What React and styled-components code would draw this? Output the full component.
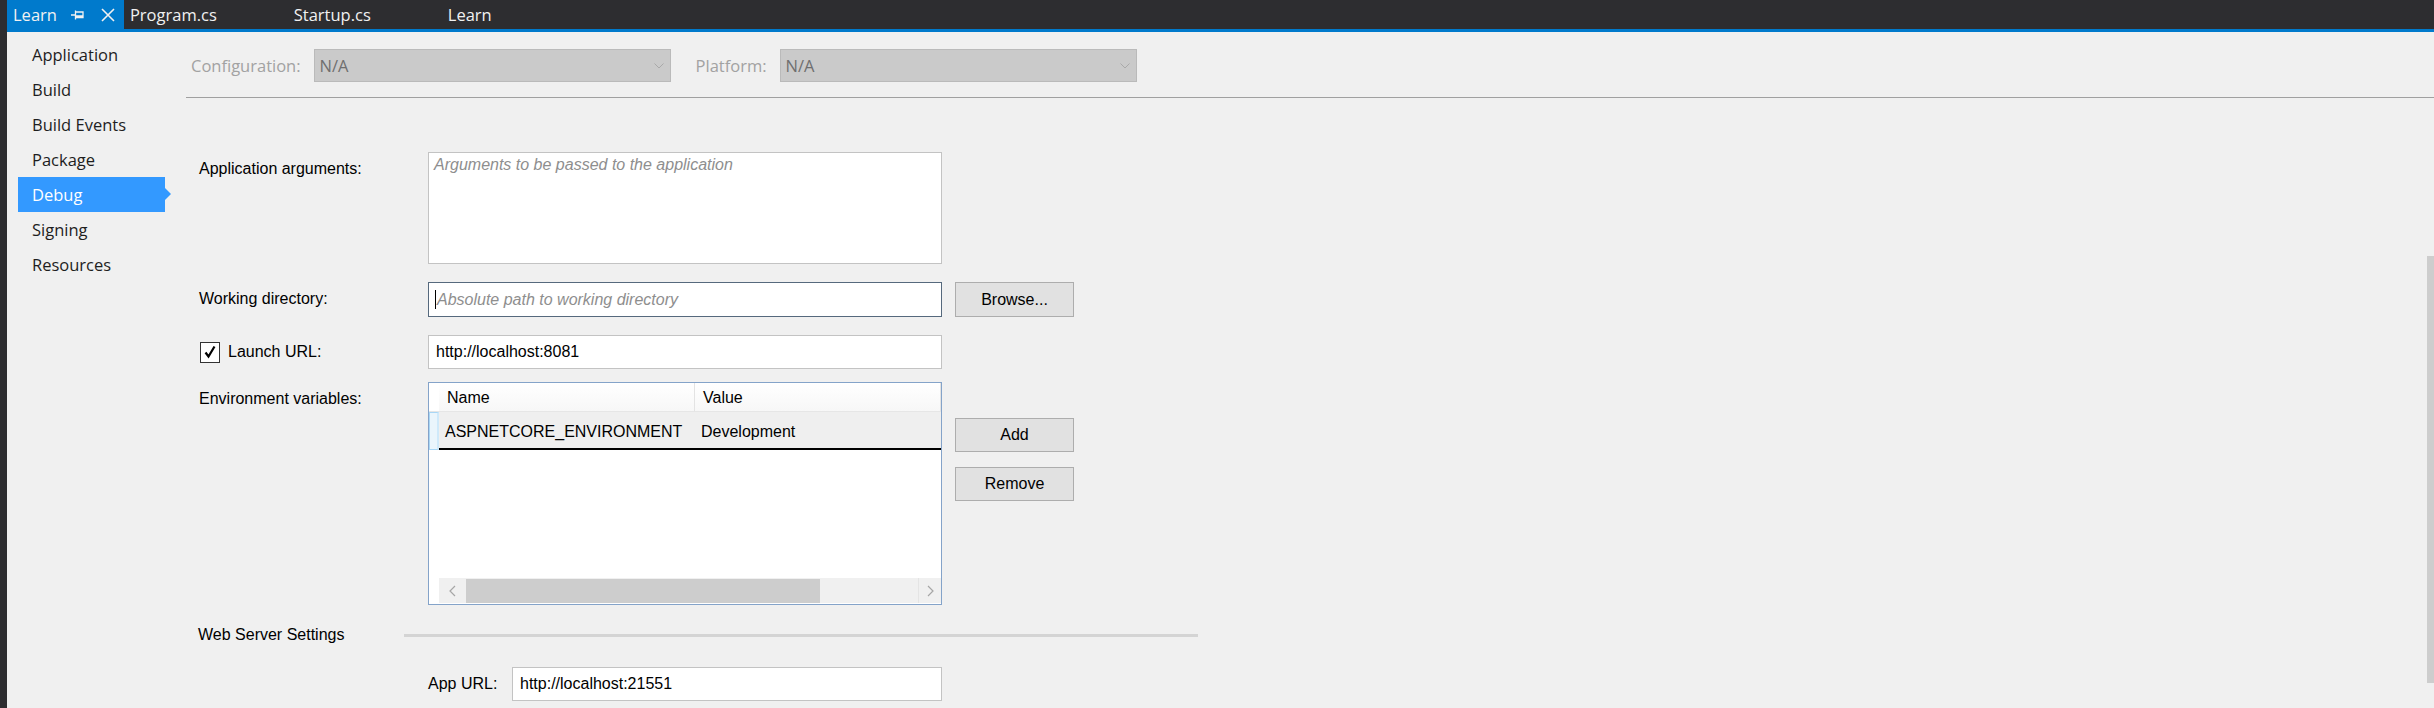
// Visual Studio project properties page, Debug tab

import React from 'react';
import styled, { createGlobalStyle } from 'styled-components';

const GlobalStyle = createGlobalStyle`
  html, body {
    margin: 0;
    padding: 0;
    background: #f0f0f0;
  }
  body {
    width: 2434px;
    height: 708px;
    overflow: hidden;
  }
`;

const Window = styled.div`
  display: flex;
  width: 2434px;
  height: 708px;
  background: #f0f0f0;
`;

const Strip = styled.div`
  width: 7px;
  flex: none;
  background: #2d2d30;
`;

const Main = styled.div`
  flex: 1;
  display: flex;
  flex-direction: column;
  min-width: 0;
`;

const TabBar = styled.div`
  display: flex;
  height: 29px;
  background: #2d2d30;
  border-bottom: 3px solid #007acc;
`;

const Tab = styled.div`
  display: flex;
  align-items: center;
  height: 29px;
  padding: 0 ${props => props.active ? 9 : 13}px 0 6px;
  background: ${props => props.active ? '#007acc' : 'transparent'};
  color: #f1f1f1;
  font-family: 'Segoe UI', 'Open Sans', sans-serif;
  font-size: 16.5px;
  white-space: nowrap;
`;

const TabIcon = styled.svg`
  flex: none;
  margin-left: ${props => props.gap}px;
  visibility: ${props => props.shown ? 'visible' : 'hidden'};
`;

const Body = styled.div`
  flex: 1;
  display: flex;
  min-height: 0;
`;

const Sidebar = styled.nav`
  width: 179px;
  flex: none;
  box-sizing: border-box;
  padding: 5px 0 0 11px;
  display: flex;
  flex-direction: column;
`;

const NavItem = styled.div`
  position: relative;
  width: 147px;
  height: 35px;
  line-height: 36px;
  box-sizing: border-box;
  padding-left: 14px;
  font-family: 'Segoe UI', 'Open Sans', sans-serif;
  font-size: 16.5px;
  color: ${props => props.active ? '#ffffff' : '#1e1e1e'};
  background: ${props => props.active ? '#3399ff' : 'transparent'};

  &::after {
    content: '';
    display: ${props => props.active ? 'block' : 'none'};
    position: absolute;
    left: 100%;
    top: 11px;
    border-left: 6px solid #3399ff;
    border-top: 6px solid transparent;
    border-bottom: 6px solid transparent;
  }
`;

const Content = styled.div`
  flex: 1;
  display: flex;
  flex-direction: column;
  min-width: 0;
`;

const ConfigBar = styled.div`
  display: flex;
  align-items: center;
  height: 33px;
  margin-top: 17px;
  padding-left: 5px;
  font-family: 'Segoe UI', 'Open Sans', sans-serif;
  font-size: 16.5px;
`;

const ConfigLabel = styled.span`
  color: #a2a2a2;
  margin: 0 13px 0 ${props => props.gap || 0}px;
`;

const Dropdown = styled.div`
  display: flex;
  align-items: center;
  justify-content: space-between;
  width: 357px;
  height: 33px;
  box-sizing: border-box;
  padding: 0 6px 0 5px;
  background: #cacaca;
  border: 1px solid #bababa;
  color: #6f6f6f;
`;

const Separator = styled.div`
  margin-top: 15px;
  height: 1px;
  background: #a0a0a0;
`;

const Page = styled.div`
  flex: 1;
  display: flex;
  min-height: 0;
`;

const Form = styled.div`
  flex: 1;
  padding: 54px 0 0 13px;
  font-family: 'Liberation Sans', Arial, sans-serif;
  font-size: 16px;
  color: #000;
`;

const Row = styled.div`
  display: grid;
  grid-template-columns: 216px 514px 119px;
  column-gap: 13px;
  align-items: start;
  margin-top: ${props => props.top || 0}px;
`;

const Label = styled.div`
  display: flex;
  align-items: center;
  gap: 8px;
  height: 34px;
  white-space: nowrap;
`;

const TextBox = styled.div`
  display: flex;
  align-items: ${props => props.multiline ? 'flex-start' : 'center'};
  height: ${props => props.h || 34}px;
  box-sizing: border-box;
  padding: ${props => props.multiline ? '3px 5px' : '0 7px'};
  background: #ffffff;
  border: 1px solid ${props => props.focused ? '#56697d' : '#c3c3c3'};
  white-space: nowrap;
`;

const Placeholder = styled.span`
  font-style: italic;
  color: #8e8e8e;
`;

const Caret = styled.span`
  display: inline-block;
  width: 1px;
  height: 19px;
  background: #000;
  margin: 0 1px 0 -1px;
`;

const Button = styled.div`
  display: flex;
  align-items: center;
  justify-content: center;
  width: 119px;
  height: ${props => props.h || 34}px;
  box-sizing: border-box;
  margin-top: ${props => props.top || 0}px;
  background: #e1e1e1;
  border: 1px solid #adadad;
`;

const ButtonStack = styled.div`
  display: flex;
  flex-direction: column;
`;

const CheckBox = styled.div`
  display: flex;
  align-items: center;
  justify-content: center;
  width: 20px;
  height: 21px;
  box-sizing: border-box;
  margin-left: 1px;
  background: #fff;
  border: 1px solid #333;
`;

const Grid = styled.div`
  display: flex;
  flex-direction: column;
  height: 223px;
  box-sizing: border-box;
  border: 1px solid #84a3c9;
  background: #fff;
`;

const GridRow = styled.div`
  display: grid;
  grid-template-columns: 10px 256px 1fr;
  height: ${props => props.h}px;
`;

const HeaderCell = styled.div`
  display: flex;
  align-items: center;
  padding: 2px 0 0 8px;
  background: linear-gradient(#ffffff, #f7f7f7);
  border-right: 1px solid #e3e3e3;
  border-bottom: 1px solid #e6e6e6;
`;

const CornerCell = styled.div`
  background: #ffffff;
  border-bottom: 1px solid #e6e6e6;
`;

const RowHeader = styled.div`
  box-sizing: border-box;
  background: #eaf5fc;
  border: 1px solid #a8d6f5;
  border-right: 2px solid #cfe9fa;
`;

const Cell = styled.div`
  display: flex;
  align-items: center;
  padding: 3px 0 0 6px;
  background: #efefef;
  border-bottom: 2px solid #000;
  white-space: nowrap;
  overflow: hidden;
`;

const GridFill = styled.div`
  flex: 1;
`;

const HScroll = styled.div`
  display: flex;
  align-items: center;
  height: 25px;
  margin: 0 0 1px 10px;
  background: #f0f0f0;
`;

const ScrollArrow = styled.div`
  display: flex;
  align-items: center;
  justify-content: center;
  width: ${props => props.w}px;
  height: 100%;
  flex: none;
  border-left: ${props => props.edge ? '1px solid #e4e4e4' : 'none'};
`;

const ScrollThumb = styled.div`
  width: 354px;
  height: 24px;
  background: #cdcdcd;
`;

const ScrollTrack = styled.div`
  flex: 1;
`;

const SectionRow = styled.div`
  display: flex;
  align-items: center;
  height: 34px;
  margin-top: ${props => props.top}px;
`;

const SectionTitle = styled.div`
  width: 206px;
  flex: none;
  margin-left: -1px;
`;

const Rule = styled.div`
  width: 794px;
  height: 3px;
  background: #d4d4d4;
`;

const Inline = styled.div`
  display: flex;
  align-items: center;
`;

const InlineLabel = styled.div`
  width: 84px;
  flex: none;
`;

const VScroll = styled.div`
  width: 7px;
  flex: none;
  height: 427px;
  margin-top: 158px;
  background: #cdcdcd;
`;

const Chevron = ({ dir }) => (
  <svg width="7" height="12" viewBox="0 0 7 12">
    <path d={dir === 'left' ? 'M6 1 L1 6 L6 11' : 'M1 1 L6 6 L1 11'} fill="none" stroke="#a6a6a6" strokeWidth="1.2" />
  </svg>
);

const DownArrow = () => (
  <svg width="10" height="6" viewBox="0 0 10 6">
    <path d="M0.5 0.5 L5 5 L9.5 0.5" fill="none" stroke="#a9a9a9" strokeWidth="1" />
  </svg>
);

const tabs = [
  { name: 'Learn', active: true },
  { name: 'Program.cs' },
  { name: 'Startup.cs' },
  { name: 'Learn' },
];

const pages = ['Application', 'Build', 'Build Events', 'Package', 'Debug', 'Signing', 'Resources'];

const App = () => {
  return (
    <Window>
      <GlobalStyle />
      <Strip />
      <Main>
        <TabBar>
          {tabs.map((t, i) => (
            <Tab key={i} active={t.active}>
              {t.name}
              <TabIcon shown={t.active} gap={14} width="13" height="10" viewBox="0 0 13 10">
                <path d="M0 5 H4.5 M4.5 0.5 V9.5 M5 2 H12 V7.5 H5 M5 6 H12" fill="none" stroke="#f1f1f1" strokeWidth="1.3" />
              </TabIcon>
              <TabIcon shown={t.active} gap={17} width="14" height="14" viewBox="0 0 14 14">
                <path d="M1 1 L13 13 M13 1 L1 13" stroke="#f1f1f1" strokeWidth="1.6" />
              </TabIcon>
            </Tab>
          ))}
        </TabBar>
        <Body>
          <Sidebar>
            {pages.map(p => (
              <NavItem key={p} active={p === 'Debug'}>{p}</NavItem>
            ))}
          </Sidebar>
          <Content>
            <ConfigBar>
              <ConfigLabel>Configuration:</ConfigLabel>
              <Dropdown>N/A<DownArrow /></Dropdown>
              <ConfigLabel gap={25}>Platform:</ConfigLabel>
              <Dropdown>N/A<DownArrow /></Dropdown>
            </ConfigBar>
            <Separator />
            <Page>
              <Form>
                <Row>
                  <Label>Application arguments:</Label>
                  <TextBox multiline h={112}>
                    <Placeholder>Arguments to be passed to the application</Placeholder>
                  </TextBox>
                </Row>

                <Row top={18}>
                  <Label>Working directory:</Label>
                  <TextBox focused h={35}>
                    <Caret />
                    <Placeholder>Absolute path to working directory</Placeholder>
                  </TextBox>
                  <Button h={35}>Browse...</Button>
                </Row>

                <Row top={18}>
                  <Label>
                    <CheckBox>
                      <svg width="14" height="14" viewBox="0 0 14 14">
                        <path d="M2.5 7.5 L5.5 11.5 L11.5 1.5" fill="none" stroke="#000" strokeWidth="2.2" />
                      </svg>
                    </CheckBox>
                    Launch URL:
                  </Label>
                  <TextBox>http://localhost:8081</TextBox>
                </Row>

                <Row top={13}>
                  <Label>Environment variables:</Label>
                  <Grid>
                    <GridRow h={29}>
                      <CornerCell />
                      <HeaderCell>Name</HeaderCell>
                      <HeaderCell>Value</HeaderCell>
                    </GridRow>
                    <GridRow h={38}>
                      <RowHeader />
                      <Cell>ASPNETCORE_ENVIRONMENT</Cell>
                      <Cell>Development</Cell>
                    </GridRow>
                    <GridFill />
                    <HScroll>
                      <ScrollArrow w={27}><Chevron dir="left" /></ScrollArrow>
                      <ScrollThumb />
                      <ScrollTrack />
                      <ScrollArrow w={22} edge><Chevron dir="right" /></ScrollArrow>
                    </HScroll>
                  </Grid>
                  <ButtonStack>
                    <Button top={36}>Add</Button>
                    <Button top={15}>Remove</Button>
                  </ButtonStack>
                </Row>

                <SectionRow top={13}>
                  <SectionTitle>Web Server Settings</SectionTitle>
                  <Rule />
                </SectionRow>

                <Row top={15}>
                  <div />
                  <Inline>
                    <InlineLabel>App URL:</InlineLabel>
                    <TextBox style={{ flex: 1 }}>http://localhost:21551</TextBox>
                  </Inline>
                </Row>
              </Form>
              <VScroll />
            </Page>
          </Content>
        </Body>
      </Main>
    </Window>
  );
};

export default App;
